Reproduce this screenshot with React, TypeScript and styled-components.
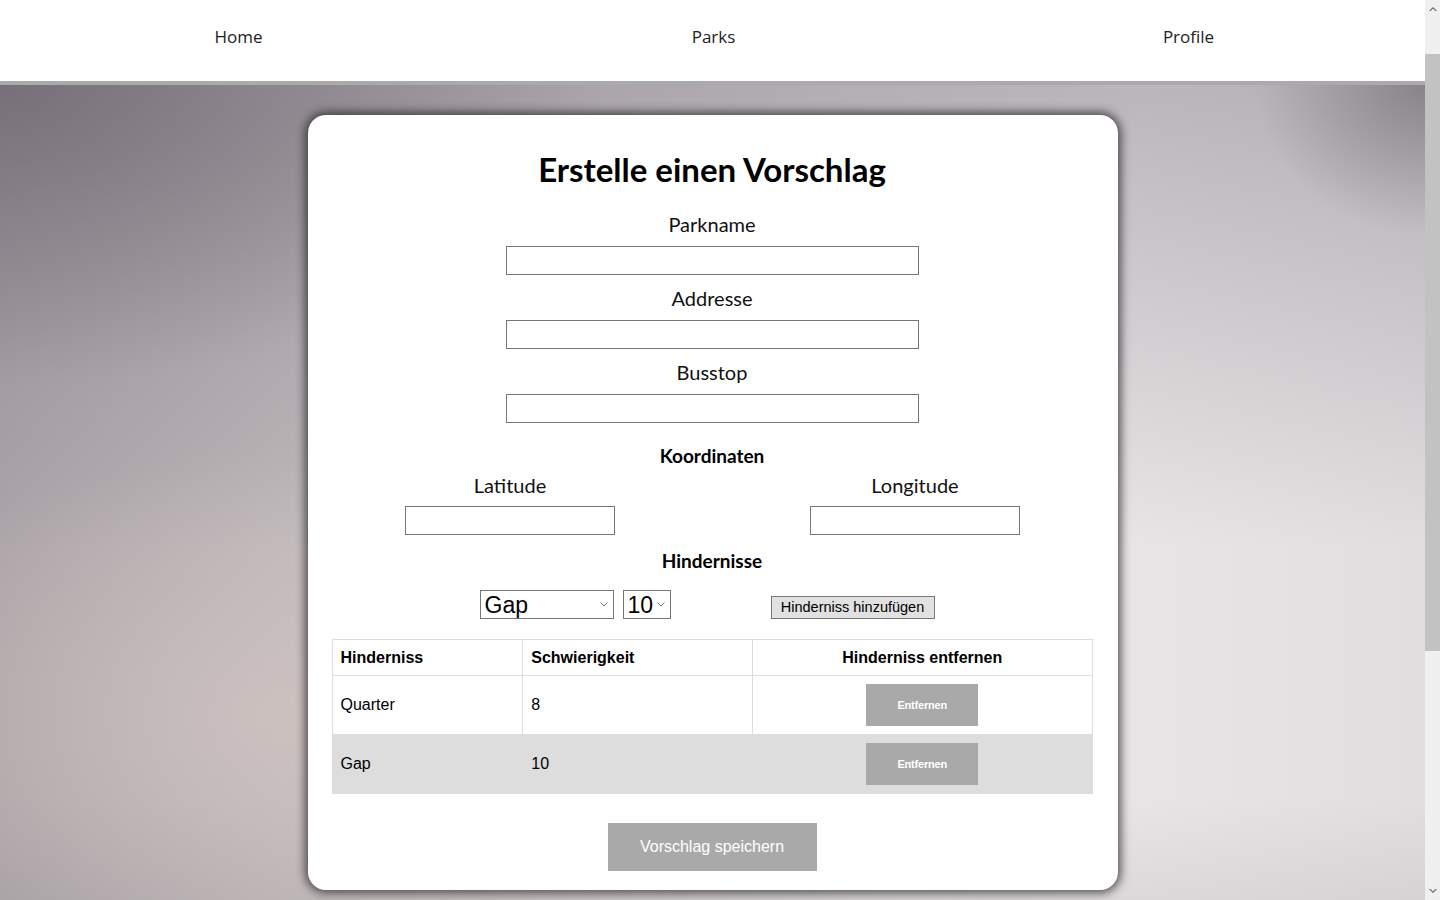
import React from "react";
import styled, { createGlobalStyle } from "styled-components";

const GlobalStyle = createGlobalStyle`
  html, body {
    margin: 0;
    padding: 0;
  }
  body {
    font-family: Lato, "Open Sans", sans-serif;
    color: #111;
    background: #d8d4d6;
  }
  * { box-sizing: border-box; }
`;

const Page = styled.div`
  width: 1425px;
`;

const Nav = styled.nav`
  display: grid;
  grid-template-columns: repeat(3, 1fr);
  align-items: center;
  height: 85px;
  padding-bottom: 8px;
  background: #fff;
  border-bottom: 4px solid #aaaaaa;
`;

const NavLink = styled.a`
  justify-self: center;
  font-family: "Open Sans", sans-serif;
  font-weight: 400;
  font-size: 17px;
  color: #222;
  text-decoration: none;
  margin-left: 2px;
`;

const Backdrop = styled.main`
  min-height: 840px;
  padding: 30px 0 30px;
  display: flex;
  justify-content: center;
  align-items: flex-start;
  background:
    radial-gradient(ellipse 170px 150px at 100% 0%, rgba(80, 76, 80, 0.45), rgba(80, 76, 80, 0) 100%),
    radial-gradient(ellipse 600px 300px at 0% 0%, rgba(95, 88, 100, 0.55), rgba(95, 88, 100, 0) 100%),
    radial-gradient(ellipse 500px 260px at 20% 75%, rgba(215, 200, 195, 0.6), rgba(215, 200, 195, 0) 100%),
    linear-gradient(to bottom, rgba(110, 104, 115, 0.38) 0%, rgba(110, 104, 115, 0) 55%, rgba(0, 0, 0, 0) 85%, rgba(150, 145, 145, 0.18) 100%),
    linear-gradient(to right, #aba4a8 0%, #c6c0c2 30%, #dedadc 60%, #e8e5e6 80%, #e0dedf 100%);
`;

const Card = styled.section`
  width: 810px;
  background: #fff;
  border-radius: 18px;
  box-shadow: 0 0 10px 3px rgba(40, 38, 42, 0.75);
  padding: 32px 25px 19px 24px;
  display: flex;
  flex-direction: column;
  align-items: center;
`;

const Title = styled.h1`
  margin: 0 0 19px;
  font-family: Lato, sans-serif;
  font-weight: 700;
  font-size: 33px;
  line-height: 44px;
  color: #000;
`;

const Field = styled.div<{ $gap?: number }>`
  display: flex;
  flex-direction: column;
  align-items: center;
  margin-bottom: ${(p) => p.$gap ?? 9}px;
`;

const Label = styled.label<{ $mb?: number }>`
  font-family: Lato, sans-serif;
  font-size: 20px;
  line-height: 28px;
  margin-bottom: ${(p) => p.$mb ?? 8}px;
  color: #111;
`;

const TextInput = styled.input<{ $w: number }>`
  width: ${(p) => p.$w}px;
  height: 29px;
  border: 1px solid #767676;
  border-radius: 0;
  background: #fff;
  padding: 2px 4px;
  font-size: 15px;
`;

const SectionHeading = styled.h3<{ $mt: number; $mb: number }>`
  margin: ${(p) => p.$mt}px 0 ${(p) => p.$mb}px;
  font-family: Lato, sans-serif;
  font-weight: 700;
  font-size: 19px;
  line-height: 24px;
  color: #000;
`;

const CoordRow = styled.div`
  align-self: stretch;
  margin: 0 -25px 0 -24px;
  display: grid;
  grid-template-columns: 1fr 1fr;
`;

const ObstacleRow = styled.div`
  display: flex;
  align-items: center;
  margin: 0 0 20px 0;
  width: 465px;
`;

const Select = styled.select<{ $w: number }>`
  appearance: none;
  -webkit-appearance: none;
  width: ${(p) => p.$w}px;
  height: 29px;
  font-family: "Liberation Sans", Arial, sans-serif;
  font-size: 23px;
  border: 1px solid #767676;
  border-radius: 0;
  background-color: #fff;
  background-image: url("data:image/svg+xml;utf8,<svg xmlns='http://www.w3.org/2000/svg' width='8' height='5' viewBox='0 0 8 5'><path d='M0.5 0.5 L4 4 L7.5 0.5' fill='none' stroke='%23707070' stroke-width='1'/></svg>");
  background-repeat: no-repeat;
  background-position: right 5px center;
  color: #000;
  padding: 0 0 0 4px;
  margin-right: 9px;
`;

const AddButton = styled.button`
  margin-left: 91px;
  margin-top: 5px;
  width: 164px;
  height: 23px;
  font-family: "Liberation Sans", Arial, sans-serif;
  font-size: 14.5px;
  color: #000;
  background: #e1e1e1;
  border: 1px solid #777;
  border-radius: 0;
  padding: 0;
`;

const Table = styled.table`
  width: 761px;
  border-collapse: collapse;
  font-family: "Liberation Sans", Arial, sans-serif;
  font-size: 16px;
  color: #000;
  margin-bottom: 29px;
`;

const Th = styled.th<{ $w: number; $center?: boolean }>`
  width: ${(p) => p.$w}px;
  height: 36px;
  border: 1px solid #dddddd;
  padding: 0 8px;
  text-align: ${(p) => (p.$center ? "center" : "left")};
  font-weight: 700;
`;

const Row = styled.tr<{ $alt?: boolean }>`
  background: ${(p) => (p.$alt ? "#dddddd" : "#fff")};
  height: 59px;
`;

const Td = styled.td<{ $center?: boolean }>`
  border: 1px solid #dddddd;
  padding: 0 8px;
  text-align: ${(p) => (p.$center ? "center" : "left")};
`;

const RemoveButton = styled.button`
  width: 112px;
  height: 42px;
  background: #a9a9a9;
  color: #fff;
  border: none;
  font-family: "Liberation Sans", Arial, sans-serif;
  font-size: 11px;
  font-weight: 700;
  letter-spacing: -0.2px;
  vertical-align: middle;
`;

const SaveButton = styled.button`
  width: 209px;
  height: 48px;
  background: #a9a9a9;
  color: #fff;
  border: none;
  font-family: "Liberation Sans", Arial, sans-serif;
  font-size: 16px;
`;

const ScrollTrack = styled.div`
  position: fixed;
  top: 0;
  right: 0;
  width: 15px;
  height: 100vh;
  background: #f0f0f0;
  display: flex;
  flex-direction: column;
  align-items: center;
`;

const ScrollArrow = styled.div`
  height: 17px;
  width: 15px;
  display: flex;
  align-items: center;
  justify-content: center;
`;

const ScrollThumb = styled.div`
  width: 15px;
  height: 597px;
  margin-top: 37px;
  background: #c2c2c2;
`;

const Spacer = styled.div`
  flex: 1;
`;

const obstacles = [
  { name: "Quarter", level: 8 },
  { name: "Gap", level: 10 },
];

export default function App() {
  return (
    <>
      <GlobalStyle />
      <Page>
        <Nav>
          <NavLink href="#">Home</NavLink>
          <NavLink href="#">Parks</NavLink>
          <NavLink href="#">Profile</NavLink>
        </Nav>
        <Backdrop>
          <Card>
            <Title>Erstelle einen Vorschlag</Title>
            <Field>
              <Label>Parkname</Label>
              <TextInput $w={413} />
            </Field>
            <Field>
              <Label>Addresse</Label>
              <TextInput $w={413} />
            </Field>
            <Field $gap={0}>
              <Label>Busstop</Label>
              <TextInput $w={413} />
            </Field>
            <SectionHeading $mt={21} $mb={3}>Koordinaten</SectionHeading>
            <CoordRow>
              <Field $gap={0}>
                <Label $mb={7}>Latitude</Label>
                <TextInput $w={210} />
              </Field>
              <Field $gap={0}>
                <Label $mb={7}>Longitude</Label>
                <TextInput $w={210} />
              </Field>
            </CoordRow>
            <SectionHeading $mt={14} $mb={17}>Hindernisse</SectionHeading>
            <ObstacleRow>
              <Select $w={134} defaultValue="Gap">
                <option>Gap</option>
                <option>Quarter</option>
                <option>Rail</option>
              </Select>
              <Select $w={48} defaultValue="10">
                {Array.from({ length: 10 }, (_, i) => (
                  <option key={i}>{i + 1}</option>
                ))}
              </Select>
              <AddButton>Hinderniss hinzufügen</AddButton>
            </ObstacleRow>
            <Table>
              <thead>
                <tr>
                  <Th $w={191}>Hinderniss</Th>
                  <Th $w={230}>Schwierigkeit</Th>
                  <Th $w={340} $center>Hinderniss entfernen</Th>
                </tr>
              </thead>
              <tbody>
                {obstacles.map((o, i) => (
                  <Row key={o.name} $alt={i % 2 === 1}>
                    <Td>{o.name}</Td>
                    <Td>{o.level}</Td>
                    <Td $center>
                      <RemoveButton>Entfernen</RemoveButton>
                    </Td>
                  </Row>
                ))}
              </tbody>
            </Table>
            <SaveButton>Vorschlag speichern</SaveButton>
          </Card>
        </Backdrop>
      </Page>
      <ScrollTrack aria-hidden>
        <ScrollArrow>
          <svg width="8" height="5" viewBox="0 0 8 5">
            <path d="M0 5 L4 1 L8 5 L6.5 5 L4 2.6 L1.5 5 Z" fill="#606060" />
          </svg>
        </ScrollArrow>
        <ScrollThumb />
        <Spacer />
        <ScrollArrow>
          <svg width="8" height="5" viewBox="0 0 8 5">
            <path d="M0 0 L4 4 L8 0 L6.5 0 L4 2.4 L1.5 0 Z" fill="#606060" />
          </svg>
        </ScrollArrow>
      </ScrollTrack>
    </>
  );
}
